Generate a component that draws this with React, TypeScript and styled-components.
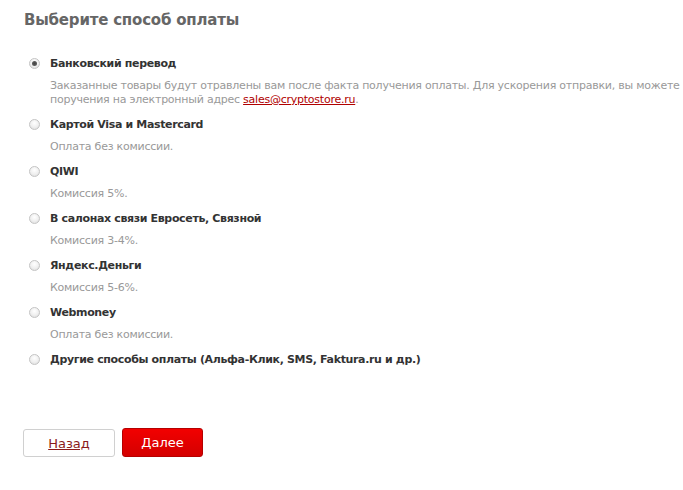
import React from 'react';
import styled, { createGlobalStyle } from 'styled-components';

type PaymentOption = {
  id: string;
  title: string;
  note?: React.ReactNode;
};

const GlobalStyle = createGlobalStyle`
  body {
    margin: 0;
    background: #fff;
    overflow: hidden;
    font-family: 'DejaVu Sans', Verdana, sans-serif;
  }
`;

const Page = styled.div`
  width: 683px;
  height: 490px;
  padding: 10px 0 0 24px;
  box-sizing: border-box;
  white-space: nowrap;
`;

const Title = styled.h1`
  margin: 0;
  font-size: 15px;
  line-height: 20px;
  font-weight: bold;
  color: #666;
  letter-spacing: -0.2px;
`;

const OptionList = styled.div`
  display: flex;
  flex-direction: column;
  gap: 9px;
  margin-top: 25px;
`;

const Option = styled.div`
  display: flex;
  flex-direction: column;
  gap: 8px;
`;

const OptionHead = styled.label`
  display: flex;
  align-items: center;
  height: 16px;
  cursor: pointer;
`;

const Radio = styled.span<{ $checked: boolean }>`
  width: 11px;
  height: 11px;
  margin: 0 10px 0 5px;
  border-radius: 50%;
  box-sizing: border-box;
  border: 1px solid #c4c4c4;
  background: radial-gradient(circle at 50% 35%, #ffffff 0%, #efefef 55%, #d8d8d8 100%);
  display: flex;
  align-items: center;
  justify-content: center;

  &::after {
    content: '';
    display: ${(p) => (p.$checked ? 'block' : 'none')};
    width: 5px;
    height: 5px;
    border-radius: 50%;
    background: radial-gradient(circle, #444 0%, #666 100%);
  }
`;

const OptionTitle = styled.span`
  font-size: 11px;
  font-weight: bold;
  color: #333;
  letter-spacing: -0.35px;
`;

const OptionNote = styled.div`
  margin-left: 26px;
  font-size: 11px;
  line-height: 14px;
  color: #999;
  letter-spacing: -0.24px;
`;

const MailLink = styled.a`
  color: #b00000;
  text-decoration: underline;
`;

const Actions = styled.div`
  display: flex;
  gap: 7px;
  margin-top: 62px;
  margin-left: -1px;
`;

const BackButton = styled.a`
  display: flex;
  align-items: center;
  justify-content: center;
  width: 92px;
  height: 28px;
  box-sizing: border-box;
  border: 1px solid #d0d0d0;
  border-radius: 3px;
  background: #fff;
  color: #8b1a1a;
  font-size: 13px;
  text-decoration: underline;
`;

const NextButton = styled.button`
  width: 81px;
  height: 29px;
  margin-top: -1px;
  border: 1px solid #b50000;
  border-radius: 3px;
  background: linear-gradient(#f20000, #d40000);
  color: #fff;
  font-family: inherit;
  font-size: 13px;
  cursor: pointer;
`;

const options: PaymentOption[] = [
  {
    id: 'bank',
    title: 'Банковский перевод',
    note: (
      <>
        Заказанные товары будут отравлены вам после факта получения оплаты. Для ускорения отправки, вы можете
        <br />
        поручения на электронный адрес <MailLink href="#">sales@cryptostore.ru</MailLink>.
      </>
    ),
  },
  { id: 'card', title: 'Картой Visa и Mastercard', note: 'Оплата без комиссии.' },
  { id: 'qiwi', title: 'QIWI', note: 'Комиссия 5%.' },
  { id: 'salon', title: 'В салонах связи Евросеть, Связной', note: 'Комиссия 3-4%.' },
  { id: 'yandex', title: 'Яндекс.Деньги', note: 'Комиссия 5-6%.' },
  { id: 'webmoney', title: 'Webmoney', note: 'Оплата без комиссии.' },
  { id: 'other', title: 'Другие способы оплаты (Альфа-Клик, SMS, Faktura.ru и др.)' },
];

const App: React.FC = () => {
  const [selected, setSelected] = React.useState<string>('bank');

  return (
    <Page>
      <GlobalStyle />
      <Title>Выберите способ оплаты</Title>
      <OptionList>
        {options.map((option) => (
          <Option key={option.id}>
            <OptionHead onClick={() => setSelected(option.id)}>
              <Radio $checked={selected === option.id} />
              <OptionTitle>{option.title}</OptionTitle>
            </OptionHead>
            {option.note && <OptionNote>{option.note}</OptionNote>}
          </Option>
        ))}
      </OptionList>
      <Actions>
        <BackButton href="#">Назад</BackButton>
        <NextButton type="button">Далее</NextButton>
      </Actions>
    </Page>
  );
};

export default App;
